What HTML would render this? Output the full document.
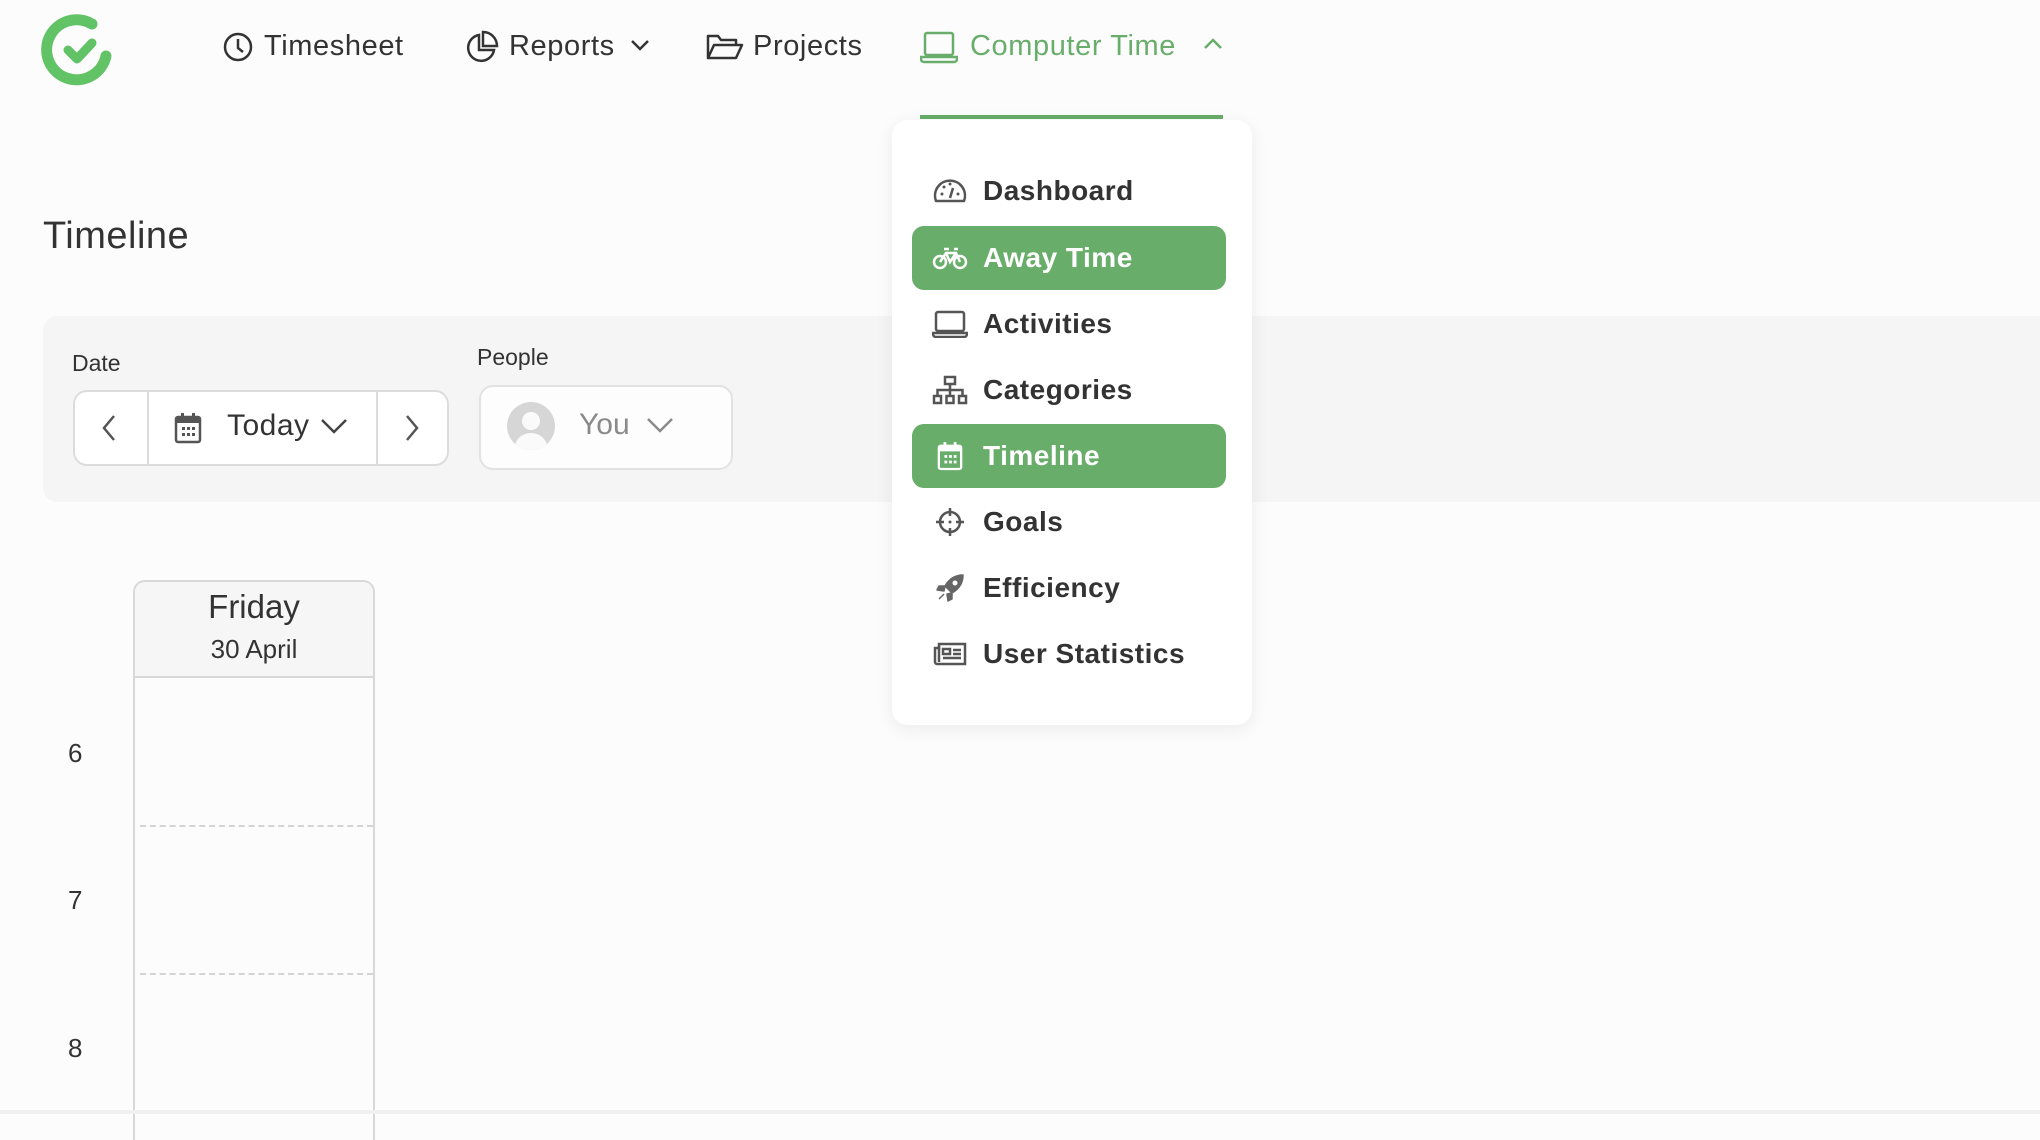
<!DOCTYPE html>
<html><head><meta charset="utf-8"><style>
*{box-sizing:border-box;margin:0;padding:0}
body{width:2040px;height:1114px;background:#fcfcfd;font-family:"Liberation Sans",sans-serif;color:#333;position:relative;overflow:hidden}
.a{position:absolute}
.nav{font-size:29px;color:#333;top:28px;line-height:36px;letter-spacing:0.6px}
.lbl{font-size:23px;color:#333}
.item{position:absolute;left:20px;width:314px;height:64px;border-radius:12px;display:flex;align-items:center;font-size:28px;font-weight:bold;color:#333;letter-spacing:0.5px}
.item .ic{width:36px;margin-left:20px;margin-right:15px;display:flex;justify-content:center}
.item.on{background:#68ad6a;color:#fff}
svg{display:block}
</style></head><body>

<svg class="a" style="left:40px;top:12px" width="76" height="76" viewBox="0 0 76 76">
<path d="M52 12 A30 30 0 1 0 66 44" fill="none" stroke="#62c266" stroke-width="11" stroke-linecap="round"/>
<path d="M28 38 L37 47 L52 31" fill="none" stroke="#62c266" stroke-width="9" stroke-linecap="round" stroke-linejoin="round"/>
</svg>

<svg class="a" style="left:222px;top:31px" width="32" height="32" viewBox="0 0 32 32"><circle cx="16" cy="16" r="13" fill="none" stroke="#333" stroke-width="2.5"/><path d="M16 8v9l5 4" fill="none" stroke="#333" stroke-width="2.5"/></svg>
<div class="a nav" style="left:264px">Timesheet</div>
<svg class="a" style="left:465px;top:30px" width="34" height="34" viewBox="0 0 34 34"><path d="M14 5A13 13 0 1 0 29 20H14Z" fill="none" stroke="#333" stroke-width="2.5"/><path d="M18 2v14h14A14 14 0 0 0 18 2Z" fill="none" stroke="#333" stroke-width="2.5"/></svg>
<div class="a nav" style="left:509px">Reports</div>
<svg class="a" style="left:630px;top:38px" width="20" height="14" viewBox="0 0 20 14"><path d="M2 3l8 8 8-8" fill="none" stroke="#333" stroke-width="2.5"/></svg>
<svg class="a" style="left:706px;top:33px" width="38" height="28" viewBox="0 0 38 28"><path d="M2 25V3h10l3 4h15v5M2 25l6-13h28l-6 13Z" fill="none" stroke="#333" stroke-width="2.5" stroke-linejoin="round"/></svg>
<div class="a nav" style="left:753px">Projects</div>
<svg class="a" style="left:920px;top:30px" width="38" height="34" viewBox="0 0 38 34"><rect x="5" y="3" width="28" height="22" rx="2" fill="none" stroke="#68ad6a" stroke-width="2.5"/><path d="M1 27h36v2a3 3 0 0 1-3 3H4a3 3 0 0 1-3-3Z" fill="none" stroke="#68ad6a" stroke-width="2.5"/></svg>
<div class="a nav" style="left:970px;color:#68ad6a">Computer Time</div>
<svg class="a" style="left:1203px;top:37px" width="20" height="14" viewBox="0 0 20 14"><path d="M2 11l8-8 8 8" fill="none" stroke="#68ad6a" stroke-width="2.5"/></svg>

<div class="a" style="left:43px;top:215px;font-size:38px;color:#333;letter-spacing:0.5px">Timeline</div>

<div class="a" style="left:43px;top:316px;width:2010px;height:186px;background:#f5f5f6;border-radius:14px"></div>
<div class="a lbl" style="left:72px;top:350px">Date</div>
<div class="a" style="left:73px;top:390px;width:376px;height:76px;background:#fff;border:2px solid #dcdcdc;border-radius:14px"></div>
<div class="a" style="left:147px;top:392px;width:2px;height:72px;background:#dcdcdc"></div>
<div class="a" style="left:376px;top:392px;width:2px;height:72px;background:#dcdcdc"></div>
<svg class="a" style="left:100px;top:413px" width="18" height="30" viewBox="0 0 18 30"><path d="M14 3L4 15l10 12" fill="none" stroke="#555" stroke-width="2.5"/></svg>
<svg class="a" style="left:403px;top:413px" width="18" height="30" viewBox="0 0 18 30"><path d="M4 3l10 12L4 27" fill="none" stroke="#555" stroke-width="2.5"/></svg>
<svg class="a" style="left:174px;top:412px" width="28" height="32" viewBox="0 0 28 32"><rect x="2" y="5" width="24" height="25" rx="2" fill="none" stroke="#555" stroke-width="2.5"/><rect x="2" y="5" width="24" height="6" fill="#555"/><rect x="7" y="1" width="3" height="6" fill="#555"/><rect x="18" y="1" width="3" height="6" fill="#555"/><g fill="#555"><rect x="8" y="15" width="3" height="3"/><rect x="13" y="15" width="3" height="3"/><rect x="18" y="15" width="3" height="3"/><rect x="8" y="21" width="3" height="3"/><rect x="13" y="21" width="3" height="3"/><rect x="18" y="21" width="3" height="3"/></g></svg>
<div class="a" style="left:227px;top:409px;font-size:30px;color:#333;letter-spacing:0.5px">Today</div>
<svg class="a" style="left:320px;top:417px" width="28" height="18" viewBox="0 0 28 18"><path d="M2 3l12 12 12-12" fill="none" stroke="#444" stroke-width="2.5"/></svg>

<div class="a lbl" style="left:477px;top:344px">People</div>
<div class="a" style="left:479px;top:385px;width:254px;height:85px;background:#fdfdfd;border:2px solid #e2e2e2;border-radius:14px"></div>
<svg class="a" style="left:506px;top:401px" width="50" height="50" viewBox="0 0 50 50"><defs><clipPath id="c"><circle cx="25" cy="25" r="24"/></clipPath></defs><circle cx="25" cy="25" r="24" fill="#d6d6d6"/><g clip-path="url(#c)" fill="#fafafa"><circle cx="25" cy="20" r="9"/><ellipse cx="25" cy="46" rx="16" ry="14"/></g></svg>
<div class="a" style="left:579px;top:408px;font-size:30px;color:#8a8a8a">You</div>
<svg class="a" style="left:646px;top:416px" width="28" height="18" viewBox="0 0 28 18"><path d="M2 3l12 12 12-12" fill="none" stroke="#8a8a8a" stroke-width="2.5"/></svg>

<div class="a" style="left:133px;top:580px;width:242px;height:560px;border-left:2px solid #d8d8d8;border-right:2px solid #d8d8d8;border-top:2px solid #d8d8d8;border-radius:12px 12px 0 0;background:#fcfcfd"></div>
<div class="a" style="left:135px;top:582px;width:238px;height:96px;background:#f6f6f7;border-radius:10px 10px 0 0;border-bottom:2px solid #d8d8d8"></div>
<div class="a" style="left:135px;top:588px;width:238px;text-align:center;font-size:33px;color:#333">Friday</div>
<div class="a" style="left:135px;top:634px;width:238px;text-align:center;font-size:26px;color:#333">30 April</div>
<div class="a" style="left:140px;top:825px;width:233px;border-top:2px dashed #d4d4d4"></div>
<div class="a" style="left:140px;top:973px;width:233px;border-top:2px dashed #d4d4d4"></div>
<div class="a" style="left:68px;top:738px;font-size:26px;color:#333">6</div>
<div class="a" style="left:68px;top:885px;font-size:26px;color:#333">7</div>
<div class="a" style="left:68px;top:1033px;font-size:26px;color:#333">8</div>
<div class="a" style="left:0;top:1110px;width:2040px;height:4px;background:#f0f0f0"></div>

<div class="a" style="left:920px;top:115px;width:303px;height:4px;background:#68ad6a"></div>
<div class="a" style="left:892px;top:120px;width:360px;height:605px;background:#fff;border-radius:16px;box-shadow:0 4px 18px rgba(0,0,0,0.07)">
<div class="item" style="top:39px"><span class="ic"><svg width="34" height="26" viewBox="0 0 34 26"><path d="M3 23A15 15 0 1 1 31 23Z" fill="none" stroke="#555" stroke-width="2.5" stroke-linejoin="round"/><path d="M17 20l3-10" stroke="#555" stroke-width="2.5"/><g fill="#555"><circle cx="9" cy="16" r="1.5"/><circle cx="11" cy="9" r="1.5"/><circle cx="17" cy="6" r="1.5"/><circle cx="25" cy="16" r="1.5"/></g></svg></span>Dashboard</div>
<div class="item on" style="top:106px"><span class="ic"><svg width="36" height="24" viewBox="0 0 36 24"><circle cx="8" cy="16" r="6" fill="none" stroke="#fff" stroke-width="2.5"/><circle cx="28" cy="16" r="6" fill="none" stroke="#fff" stroke-width="2.5"/><path d="M8 16l6-9h10l4 9M14 7l4 9 6-9M12 3h5M22 3h4" fill="none" stroke="#fff" stroke-width="2.5"/></svg></span>Away Time</div>
<div class="item" style="top:172px"><span class="ic"><svg width="36" height="28" viewBox="0 0 36 28"><rect x="4" y="2" width="28" height="19" rx="2" fill="none" stroke="#555" stroke-width="2.5"/><path d="M1 23h34v1a3 3 0 0 1-3 3H4a3 3 0 0 1-3-3Z" fill="none" stroke="#555" stroke-width="2.5"/></svg></span>Activities</div>
<div class="item" style="top:238px"><span class="ic"><svg width="36" height="30" viewBox="0 0 36 30"><g fill="none" stroke="#555" stroke-width="2.5"><rect x="13" y="2" width="10" height="7"/><rect x="2" y="21" width="7" height="7"/><rect x="14.5" y="21" width="7" height="7"/><rect x="27" y="21" width="7" height="7"/><path d="M18 9v6M5.5 21v-6h25v6M18 15v6"/></g></svg></span>Categories</div>
<div class="item on" style="top:304px"><span class="ic"><svg width="26" height="30" viewBox="0 0 28 32"><rect x="2" y="5" width="24" height="25" rx="2" fill="none" stroke="#fff" stroke-width="2.5"/><rect x="2" y="5" width="24" height="6" fill="#fff"/><rect x="7" y="1" width="3" height="6" fill="#fff"/><rect x="18" y="1" width="3" height="6" fill="#fff"/><g fill="#fff"><rect x="8" y="15" width="3" height="3"/><rect x="13" y="15" width="3" height="3"/><rect x="18" y="15" width="3" height="3"/><rect x="8" y="21" width="3" height="3"/><rect x="13" y="21" width="3" height="3"/><rect x="18" y="21" width="3" height="3"/></g></svg></span>Timeline</div>
<div class="item" style="top:370px"><span class="ic"><svg width="30" height="30" viewBox="0 0 30 30"><circle cx="15" cy="15" r="10" fill="none" stroke="#555" stroke-width="2.5"/><path d="M15 1v8M15 21v8M1 15h8M21 15h8" stroke="#555" stroke-width="2.5"/><circle cx="15" cy="15" r="1.5" fill="#555"/></svg></span>Goals</div>
<div class="item" style="top:436px"><span class="ic"><svg width="30" height="30" viewBox="0 0 30 30"><path d="M28 2c-8 0-14 4-18 11l7 7c7-4 11-10 11-18ZM10 13H4l-2 4 7 1ZM17 20v6l-4 2-1-7ZM9 21l-5 5" fill="#666" stroke="#666" stroke-width="1.5" stroke-linejoin="round"/><circle cx="20" cy="10" r="2.5" fill="#fff"/></svg></span>Efficiency</div>
<div class="item" style="top:502px"><span class="ic"><svg width="34" height="24" viewBox="0 0 34 24"><g fill="none" stroke="#555" stroke-width="2.5"><path d="M6 2h26v20H4a2 2 0 0 1-2-2V6h4Z"/><path d="M6 4v16"/><rect x="10" y="7" width="7" height="5"/><path d="M20 8h8M20 12h8M10 16h18"/></g></svg></span>User Statistics</div>
</div>

</body></html>
